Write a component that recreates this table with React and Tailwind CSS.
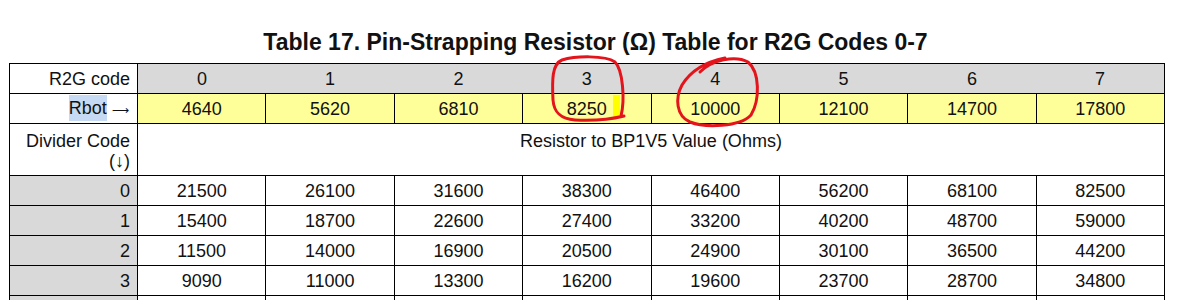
import React from 'react'

const codes = [0, 1, 2, 3, 4, 5, 6, 7]
const rbot = ['4640', '5620', '6810', '8250', '10000', '12100', '14700', '17800']
const rows = [
	['21500', '26100', '31600', '38300', '46400', '56200', '68100', '82500'],
	['15400', '18700', '22600', '27400', '33200', '40200', '48700', '59000'],
	['11500', '14000', '16900', '20500', '24900', '30100', '36500', '44200'],
	['9090', '11000', '13300', '16200', '19600', '23700', '28700', '34800'],
]

// hand drawn markup over the table
function Circles() {
	return (
		<svg className="pointer-events-none absolute left-0 top-0" width="1202" height="300" fill="none">
			<path
				d="M621 116 C625 100, 623 70, 615 62 C605 55, 575 56, 562 60 C552 64, 552 80, 553 100 C554 112, 560 119, 575 120 C595 121, 612 119, 624 116"
				stroke="#e3141b"
				strokeWidth="3"
				strokeLinecap="round"
			/>
			<path
				d="M700 72 C712 60, 735 55, 748 62 C760 72, 760 100, 751 115 C740 127, 705 128, 690 122 C676 116, 675 98, 682 85 C690 72, 705 62, 725 58"
				stroke="#e3141b"
				strokeWidth="3"
				strokeLinecap="round"
			/>
		</svg>
	)
}

export default function App() {
	return (
		<div className="relative h-[300px] w-[1202px] overflow-hidden bg-white text-[#111]" style={{ fontFamily: '"Liberation Sans", Arial, sans-serif' }}>
			<div className="h-[63px] pr-[11px] pt-[29px] text-center text-[23px] font-bold leading-[26px]">
				Table 17. Pin-Strapping Resistor (Ω) Table for R2G Codes 0-7
			</div>
			<table className="ml-[9px] w-[1156px] table-fixed border-collapse text-[18px] leading-[20px]">
				<colgroup>
					<col className="w-[128px]" />
					{codes.map(c => (
						<col key={c} />
					))}
				</colgroup>
				<tbody>
					<tr className="h-[30px]">
						<td className="border border-black pr-[7px] text-right">R2G code</td>
						{codes.map(c => (
							<td key={c} className="border-y border-black bg-[#d9d9d9] text-center last:border-r">
								{c}
							</td>
						))}
					</tr>
					<tr className="h-[30px]">
						<td className="border border-black pr-[8px] text-right">
							<span className="bg-[#c6dbf3] py-[3px]">Rbot</span>{' '}
							<span style={{ fontFamily: '"DejaVu Sans", sans-serif' }} className="text-[12px]">⟶</span>
						</td>
						{rbot.map((v, i) => (
							<td key={i} className="border border-black bg-[#ffff99] text-center">
								{i === 3 ? (
									<span className="relative">
										{v}
										<span className="absolute left-full top-[-4px] ml-[6px] h-[23px] w-[7px] bg-[#ffff00]" />
									</span>
								) : (
									v
								)}
							</td>
						))}
					</tr>
					<tr className="h-[51px]">
						<td className="border border-black pb-[4px] pr-[7px] pt-[7px] text-right align-top">
							Divider Code
							<br />
							(↓)
						</td>
						<td colSpan={8} className="border border-black pt-[7px] text-center align-top">
							Resistor to BP1V5 Value (Ohms)
						</td>
					</tr>
					{rows.map((r, ri) => (
						<tr key={ri} className="h-[30px]">
							<td className="border border-black bg-[#d9d9d9] pr-[7px] text-right">{ri}</td>
							{r.map((v, i) => (
								<td key={i} className="border border-black text-center">
									{v}
								</td>
							))}
						</tr>
					))}
					<tr className="h-[30px]">
						<td className="border border-black bg-[#d9d9d9]" />
						{codes.map(c => (
							<td key={c} className="border border-black" />
						))}
					</tr>
				</tbody>
			</table>
			<Circles />
		</div>
	)
}
